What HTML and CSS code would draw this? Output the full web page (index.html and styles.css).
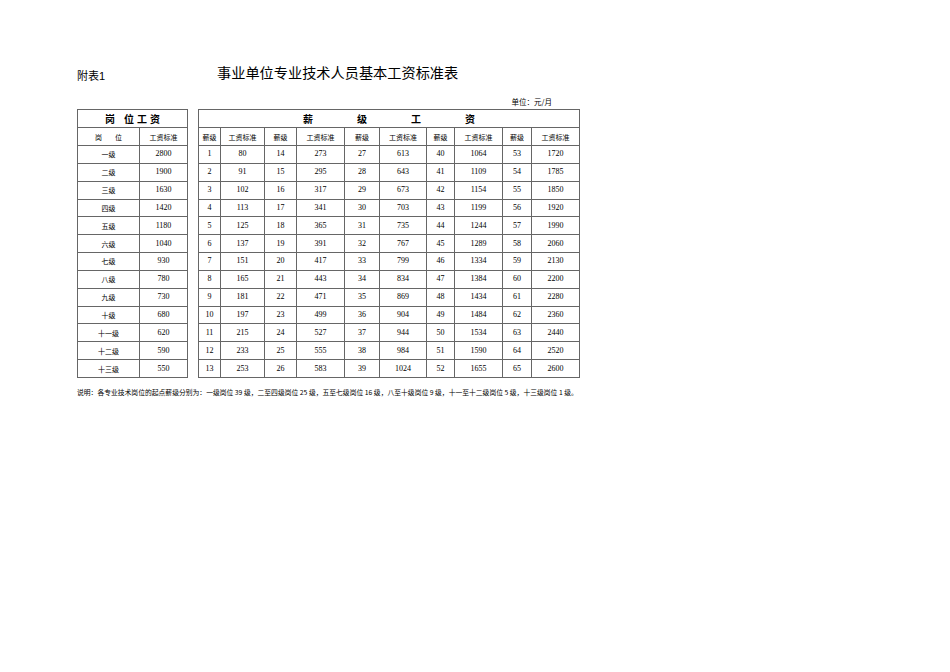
FILE: index.html
```html
<!DOCTYPE html>
<html lang="zh">
<head>
<meta charset="utf-8">
<title>事业单位专业技术人员基本工资标准表</title>
<link rel="stylesheet" href="styles.css">
</head>
<body>
<div class="page">
  <div class="title-row">
    <div class="label">附表1</div>
    <div class="title">事业单位专业技术人员基本工资标准表</div>
  </div>
  <div class="unit-row">单位：元/月</div>
  <div class="tables">
    <table class="tbl left">
      <colgroup><col style="width:62px"><col style="width:48px"></colgroup>
      <tr class="h1"><th colspan="2"><span class="spread-s"><span>岗</span><span class="wide">位</span><span>工</span><span>资</span></span></th></tr>
      <tr class="h2"><td class="cjk"><span class="spread-m"><span>岗</span><span>位</span></span></td><td class="cjk">工资标准</td></tr>
      <tr><td class="cjk">一级</td><td>2800</td></tr>
      <tr><td class="cjk">二级</td><td>1900</td></tr>
      <tr><td class="cjk">三级</td><td>1630</td></tr>
      <tr><td class="cjk">四级</td><td>1420</td></tr>
      <tr><td class="cjk">五级</td><td>1180</td></tr>
      <tr><td class="cjk">六级</td><td>1040</td></tr>
      <tr><td class="cjk">七级</td><td>930</td></tr>
      <tr><td class="cjk">八级</td><td>780</td></tr>
      <tr><td class="cjk">九级</td><td>730</td></tr>
      <tr><td class="cjk">十级</td><td>680</td></tr>
      <tr><td class="cjk">十一级</td><td>620</td></tr>
      <tr><td class="cjk">十二级</td><td>590</td></tr>
      <tr><td class="cjk">十三级</td><td>550</td></tr>
    </table>
    <table class="tbl right">
      <colgroup>
        <col style="width:22px"><col style="width:44px"><col style="width:32px"><col style="width:48px"><col style="width:35px"><col style="width:47px"><col style="width:28px"><col style="width:48px"><col style="width:29px"><col style="width:48px">
      </colgroup>
      <tr class="h1"><th colspan="10"><span class="spread-l"><span>薪</span><span>级</span><span>工</span><span>资</span></span></th></tr>
      <tr class="h2">
        <td class="cjk">薪级</td><td class="cjk">工资标准</td><td class="cjk">薪级</td><td class="cjk">工资标准</td><td class="cjk">薪级</td><td class="cjk">工资标准</td><td class="cjk">薪级</td><td class="cjk">工资标准</td><td class="cjk">薪级</td><td class="cjk">工资标准</td>
      </tr>
      <tr><td>1</td><td>80</td><td>14</td><td>273</td><td>27</td><td>613</td><td>40</td><td>1064</td><td>53</td><td>1720</td></tr>
      <tr><td>2</td><td>91</td><td>15</td><td>295</td><td>28</td><td>643</td><td>41</td><td>1109</td><td>54</td><td>1785</td></tr>
      <tr><td>3</td><td>102</td><td>16</td><td>317</td><td>29</td><td>673</td><td>42</td><td>1154</td><td>55</td><td>1850</td></tr>
      <tr><td>4</td><td>113</td><td>17</td><td>341</td><td>30</td><td>703</td><td>43</td><td>1199</td><td>56</td><td>1920</td></tr>
      <tr><td>5</td><td>125</td><td>18</td><td>365</td><td>31</td><td>735</td><td>44</td><td>1244</td><td>57</td><td>1990</td></tr>
      <tr><td>6</td><td>137</td><td>19</td><td>391</td><td>32</td><td>767</td><td>45</td><td>1289</td><td>58</td><td>2060</td></tr>
      <tr><td>7</td><td>151</td><td>20</td><td>417</td><td>33</td><td>799</td><td>46</td><td>1334</td><td>59</td><td>2130</td></tr>
      <tr><td>8</td><td>165</td><td>21</td><td>443</td><td>34</td><td>834</td><td>47</td><td>1384</td><td>60</td><td>2200</td></tr>
      <tr><td>9</td><td>181</td><td>22</td><td>471</td><td>35</td><td>869</td><td>48</td><td>1434</td><td>61</td><td>2280</td></tr>
      <tr><td>10</td><td>197</td><td>23</td><td>499</td><td>36</td><td>904</td><td>49</td><td>1484</td><td>62</td><td>2360</td></tr>
      <tr><td>11</td><td>215</td><td>24</td><td>527</td><td>37</td><td>944</td><td>50</td><td>1534</td><td>63</td><td>2440</td></tr>
      <tr><td>12</td><td>233</td><td>25</td><td>555</td><td>38</td><td>984</td><td>51</td><td>1590</td><td>64</td><td>2520</td></tr>
      <tr><td>13</td><td>253</td><td>26</td><td>583</td><td>39</td><td>1024</td><td>52</td><td>1655</td><td>65</td><td>2600</td></tr>
    </table>
  </div>
  <div class="note">说明：各专业技术岗位的起点薪级分别为：一级岗位 39 级，二至四级岗位 25 级，五至七级岗位 16 级，八至十级岗位 9 级，十一至十二级岗位 5 级，十三级岗位 1 级。</div>
</div>
</body>
</html>
```

FILE: styles.css
```css
html, body {
  margin: 0;
  padding: 0;
  background: #fff;
}

body {
  width: 950px;
  height: 672px;
  color: #000;
  font-family: "Liberation Sans", "Noto Sans CJK SC", sans-serif;
}

.page {
  padding: 62px 0 0 77px;
}

.title-row {
  display: flex;
  height: 20px;
  align-items: center;
}

.label {
  width: 140px;
  font-size: 11px;
  line-height: 14px;
  margin-top: 7px;
  font-family: "Liberation Sans", "Noto Sans CJK SC", sans-serif;
}

.title {
  font-size: 14.2px;
  line-height: 20px;
  font-family: "Noto Sans CJK SC", sans-serif;
}

.unit-row {
  width: 475px;
  margin-top: 15px;
  height: 10px;
  line-height: 10px;
  font-size: 7.5px;
  text-align: right;
  font-family: "Noto Sans CJK SC", sans-serif;
}

.tables {
  display: flex;
  gap: 10px;
  margin-top: 2px;
  align-items: flex-start;
}

.tbl {
  border-collapse: collapse;
  table-layout: fixed;
  border: 1px solid #555;
}

.tbl.left {
  width: 111px;
}

.tbl.right {
  width: 382px;
}

.tbl th,
.tbl td {
  border: 1px solid #666;
  padding: 0;
  text-align: center;
  vertical-align: middle;
  white-space: nowrap;
  overflow: hidden;
}

.tbl td {
  height: 16.85px;
  font-family: "Liberation Serif", serif;
  font-size: 8px;
  line-height: 10px;
}

.tbl tr.h1 th {
  height: 17px;
  font-family: "Noto Sans CJK SC", sans-serif;
  font-size: 10px;
  font-weight: bold;
  line-height: 12px;
}

.tbl tr.h2 td {
  height: 17px;
}

.tbl td.cjk {
  font-family: "Noto Sans CJK SC", sans-serif;
  font-size: 7px;
}

.spread-s,
.spread-m,
.spread-l {
  display: inline-flex;
  justify-content: center;
}

.spread-s {
  gap: 3px;
}

.spread-s .wide {
  margin-left: 6px;
}

.spread-m {
  gap: 13px;
}

.spread-l {
  gap: 44px;
}

.note {
  margin-top: 9px;
  font-size: 6.8px;
  line-height: 10px;
  white-space: nowrap;
  font-family: "Noto Sans CJK SC", sans-serif;
}
```
